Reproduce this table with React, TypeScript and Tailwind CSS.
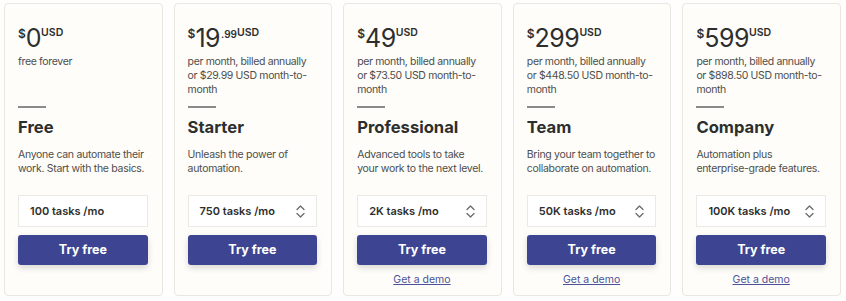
import React from "react";

type Plan = {
  dollars: string;
  cents?: string;
  sub: string[];
  name: string;
  desc: string[];
  tasks: string;
  select: boolean;
  demo: boolean;
};

const plans: Plan[] = [
  { dollars: "0", sub: ["free forever"], name: "Free", desc: ["Anyone can automate their", "work. Start with the basics."], tasks: "100 tasks /mo", select: false, demo: false },
  { dollars: "19", cents: ".99", sub: ["per month, billed annually", "or $29.99 USD month-to-", "month"], name: "Starter", desc: ["Unleash the power of", "automation."], tasks: "750 tasks /mo", select: true, demo: false },
  { dollars: "49", sub: ["per month, billed annually", "or $73.50 USD month-to-", "month"], name: "Professional", desc: ["Advanced tools to take", "your work to the next level."], tasks: "2K tasks /mo", select: true, demo: true },
  { dollars: "299", sub: ["per month, billed annually", "or $448.50 USD month-to-", "month"], name: "Team", desc: ["Bring your team together to", "collaborate on automation."], tasks: "50K tasks /mo", select: true, demo: true },
  { dollars: "599", sub: ["per month, billed annually", "or $898.50 USD month-to-", "month"], name: "Company", desc: ["Automation plus", "enterprise-grade features."], tasks: "100K tasks /mo", select: true, demo: true },
];

function Chevrons() {
  return (
    <svg width="9" height="13" viewBox="0 0 9 13" fill="none" stroke="#6b6b6b" strokeWidth="1.3" strokeLinecap="round" strokeLinejoin="round">
      <path d="M1 4.5 L4.5 1 L8 4.5" />
      <path d="M1 8.5 L4.5 12 L8 8.5" />
    </svg>
  );
}

function Lines({ lines }: { lines: string[] }) {
  return (
    <>
      {lines.map((l, i) => (
        <span key={i} className="block whitespace-nowrap">
          {l}
        </span>
      ))}
    </>
  );
}

function Card({ p }: { p: Plan }) {
  return (
    <div className="flex flex-col rounded-[4px] border border-[#e9e7e2] bg-[#fefdf9] pl-[13px] pr-[14px] pt-[20px] h-[293px]">
      <div className="flex items-start h-[28px] text-[#2d2e2e]">
        <span className="text-[12px] font-semibold leading-none mt-[4px]">$</span>
        <span className="text-[25px] leading-none mt-[2px] tracking-[-0.5px]">{p.dollars}</span>
        {p.cents && <span className="text-[10px] font-semibold leading-none mt-[5px] ml-[1px]">{p.cents}</span>}
        <span className="text-[10.5px] font-semibold leading-none mt-[4px]">USD</span>
      </div>
      <p className="mt-[3px] h-[51px] text-[10.5px] tracking-[-0.35px] leading-[14px] text-[#4d4d4c]">
        <Lines lines={p.sub} />
      </p>
      <div className="h-[2px] w-[28px] bg-[#8a8a88]" />
      <h2 className="mt-[9px] text-[16.6px] font-bold leading-[20px] text-[#2d2e2e]">{p.name}</h2>
      <p className="mt-[11px] h-[47px] text-[10.5px] tracking-[-0.3px] leading-[14px] text-[#4d4d4c]">
        <Lines lines={p.desc} />
      </p>
      <div className="flex h-[32px] items-center justify-between border border-[#ebe9e4] bg-white pl-[11px] pr-[11px] text-[11px] font-semibold text-[#2d2e2e]">
        <span>{p.tasks}</span>
        {p.select && <Chevrons />}
      </div>
      <button className="mt-[8px] h-[30px] rounded-[3px] bg-[#3d4592] text-[12.5px] font-bold text-white shadow-[0_3px_6px_rgba(0,0,0,0.15)]">
        Try free
      </button>
      {p.demo && (
        <a className="mt-[8px] text-center text-[10.5px] leading-[14px] text-[#4b5298] underline">Get a demo</a>
      )}
    </div>
  );
}

export default function App() {
  return (
    <div className="w-[846px] h-[301px] bg-[#fffefc] pt-[3px] pl-[4px]" style={{ fontFamily: "Inter, 'Noto Sans', sans-serif" }}>
      <div className="grid w-[837px] grid-cols-5 gap-[11px]">
        {plans.map((p) => (
          <Card key={p.name} p={p} />
        ))}
      </div>
    </div>
  );
}
